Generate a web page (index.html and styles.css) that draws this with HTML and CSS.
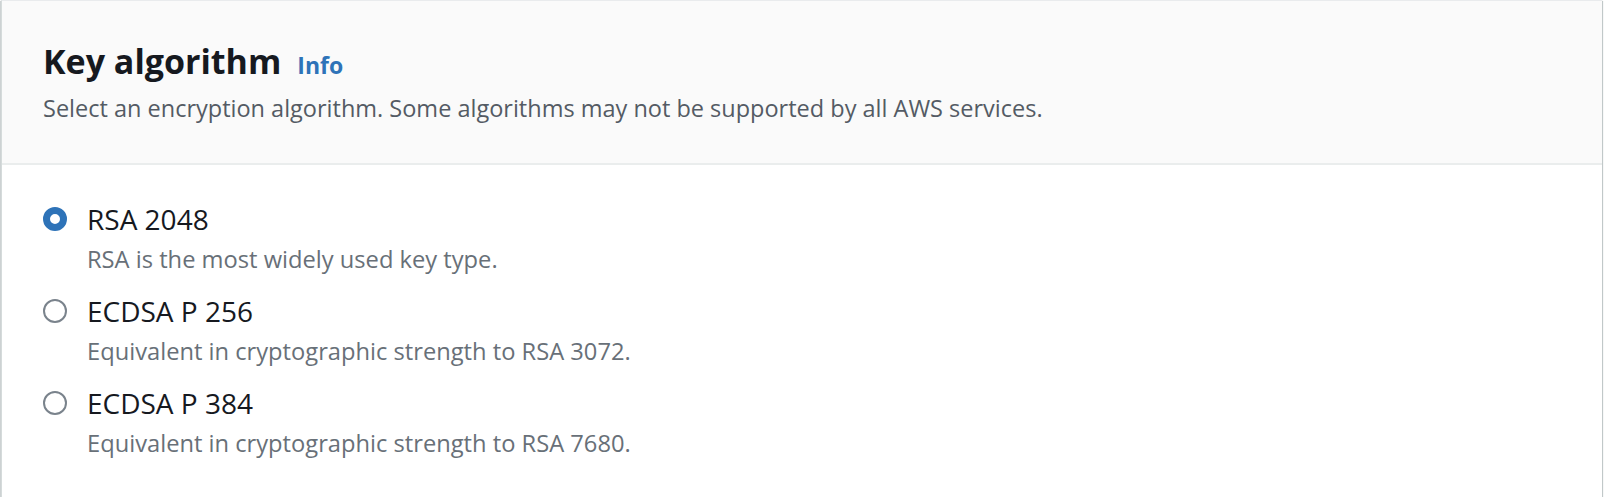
FILE: index.html
```html
<!DOCTYPE html>
<html lang="en">
<head>
<meta charset="utf-8">
<title>Key algorithm</title>
<link rel="stylesheet" href="styles.css">
</head>
<body>
<section class="card">
  <header class="card-header">
    <div class="title-row">
      <h2 class="title">Key algorithm</h2>
      <a class="info" href="#">Info</a>
    </div>
    <p class="subtitle">Select an encryption algorithm. Some algorithms may not be supported by all AWS services.</p>
  </header>
  <div class="card-body">
    <label class="option">
      <span class="radio checked"></span>
      <span class="option-text">
        <span class="option-label">RSA 2048</span>
        <span class="option-desc">RSA is the most widely used key type.</span>
      </span>
    </label>
    <label class="option">
      <span class="radio"></span>
      <span class="option-text">
        <span class="option-label">ECDSA P 256</span>
        <span class="option-desc">Equivalent in cryptographic strength to RSA 3072.</span>
      </span>
    </label>
    <label class="option">
      <span class="radio"></span>
      <span class="option-text">
        <span class="option-label">ECDSA P 384</span>
        <span class="option-desc">Equivalent in cryptographic strength to RSA 7680.</span>
      </span>
    </label>
  </div>
</section>
</body>
</html>
```

FILE: styles.css
```css
html, body {
  margin: 0;
  padding: 0;
  background: #ffffff;
}
body {
  font-family: "Open Sans", "Noto Sans", sans-serif;
  color: #16191f;
}
.card {
  margin: 0 2px 0 1px;
  height: 497px;
  box-sizing: border-box;
  border-top: 1px solid #e9ebed;
  border-left: 1px solid #d5dbdb;
  background: #ffffff;
  box-shadow: 0 1px 1px 0 rgba(0, 28, 36, 0.3), 1px 1px 1px 0 rgba(0, 28, 36, 0.2), -1px 1px 1px 0 rgba(0, 28, 36, 0.15);
  display: flex;
  flex-direction: column;
}
.card-header {
  background: #fafafa;
  border-bottom: 2px solid #eaeded;
  height: 164px;
  box-sizing: border-box;
  padding: 40px 0 0 41px;
}
.title-row {
  display: flex;
  align-items: baseline;
  gap: 16px;
}
.title {
  margin: 0;
  font-size: 34px;
  line-height: 40px;
  font-weight: 700;
  color: #16191f;
}
.info {
  font-size: 23px;
  font-weight: 700;
  color: #2e73b8;
  text-decoration: none;
}
.subtitle {
  margin: 12px 0 0;
  font-size: 23.5px;
  line-height: 30px;
  color: #545b64;
}
.card-body {
  padding: 34px 0 0 41px;
  display: flex;
  flex-direction: column;
  gap: 12px;
}
.option {
  display: flex;
  align-items: flex-start;
  gap: 20px;
}
.radio {
  width: 24px;
  height: 24px;
  box-sizing: border-box;
  border-radius: 50%;
  border: 2px solid #7a838c;
  margin-top: 8px;
  flex: none;
}
.radio.checked {
  border: 7px solid #2e73b8;
  background: #ffffff;
}
.option-text {
  display: flex;
  flex-direction: column;
}
.option-label {
  font-size: 28px;
  line-height: 40px;
  color: #16191f;
}
.option-desc {
  font-size: 23.7px;
  line-height: 40px;
  color: #687078;
}
```
